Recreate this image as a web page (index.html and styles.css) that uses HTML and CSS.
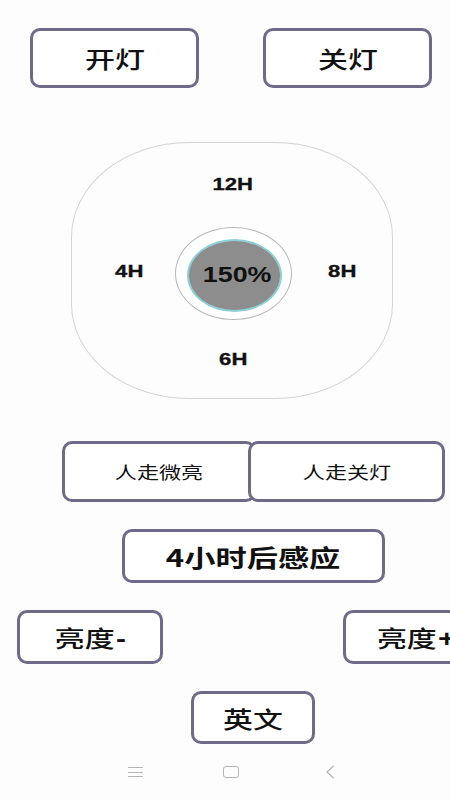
FILE: index.html
```html
<!DOCTYPE html>
<html lang="zh-CN">
<head>
    <meta charset="UTF-8">
    <title>灯光控制</title>
    <link rel="stylesheet" href="styles.css">
</head>
<body>
    <div class="top-row">
        <button class="btn btn-power"><span class="label">开灯</span></button>
        <button class="btn btn-power"><span class="label">关灯</span></button>
    </div>

    <!-- 定时选择盘 -->
    <div class="dial">
        <span class="hour hour-top">12H</span>
        <span class="hour hour-left">4H</span>
        <div class="ring">
            <div class="level"><span class="level-text">150%</span></div>
        </div>
        <span class="hour hour-right">8H</span>
        <span class="hour hour-bottom">6H</span>
    </div>

    <div class="mode-row">
        <button class="btn btn-mode"><span class="label small">人走微亮</span></button>
        <button class="btn btn-mode btn-mode-right"><span class="label small">人走关灯</span></button>
    </div>

    <button class="btn btn-sense"><span class="label bold">4小时后感应</span></button>

    <div class="bright-row">
        <button class="btn btn-bright"><span class="label">亮度<b class="sign">-</b></span></button>
        <button class="btn btn-bright"><span class="label">亮度<b class="sign">+</b></span></button>
    </div>

    <button class="btn btn-lang"><span class="label">英文</span></button>

    <div class="nav-bar">
        <span class="nav-menu"><i></i><i></i><i></i></span>
        <span class="nav-home"></span>
        <svg class="nav-back" width="10" height="14" viewBox="0 0 10 14">
            <path d="M8.5 1 L2 7 L8.5 13" fill="none" stroke="#b4b4b8" stroke-width="1.2"/>
        </svg>
    </div>
</body>
</html>
```

FILE: styles.css
```css
html, body {
    overflow: hidden;
}
body {
    margin: 0;
    width: 450px;
    height: 800px;
    background-color: #fdfdfe;
    font-family: "Noto Sans CJK SC", "Liberation Sans", sans-serif;
    color: #111;
}
.btn {
    display: flex;
    align-items: center;
    justify-content: center;
    flex-shrink: 0;
    box-sizing: border-box;
    padding: 0;
    background: #fff;
    border: 3px solid #6f6a87;
    border-radius: 10px;
    font-family: inherit;
    color: #111;
}
.label {
    display: inline-block;
    font-size: 23px;
    font-weight: 500;
    transform: scaleX(1.3);
    white-space: nowrap;
}
.label.small {
    font-size: 17px;
    font-weight: 400;
}
.label.bold {
    font-size: 24px;
    font-weight: 700;
    transform: scaleX(1.3);
}
.sign {
    font-family: "Liberation Sans", Arial, sans-serif;
    font-weight: 700;
    margin-left: 1px;
}

.top-row {
    display: flex;
    gap: 64px;
    padding: 28px 0 0 30px;
}
.btn-power {
    width: 169px;
    height: 60px;
}

.dial {
    display: grid;
    grid-template-columns: 114px 94px 114px;
    grid-template-rows: 84px 93px 80px;
    box-sizing: border-box;
    width: 322px;
    height: 257px;
    margin: 54px 0 0 71px;
    border: 1px solid #d4d4d6;
    border-radius: 118px / 95px;
}
.hour {
    align-self: center;
    justify-self: center;
    font-family: "Liberation Sans", Arial, sans-serif;
    font-weight: 700;
    font-size: 16px;
    transform: scaleX(1.38);
    -webkit-text-stroke: 0.3px #111;
}
.hour-top { grid-column: 2; grid-row: 1; }
.hour-left { grid-column: 1; grid-row: 2; margin-bottom: 4px; }
.hour-right { grid-column: 3; grid-row: 2; justify-self: end; margin: 0 42px 4px 0; }
.hour-bottom { grid-column: 2; grid-row: 3; }
.ring {
    grid-column: 2;
    grid-row: 2;
    justify-self: center;
    display: flex;
    align-items: center;
    justify-content: center;
    box-sizing: border-box;
    width: 117px;
    height: 93px;
    border: 1px solid #b9b6b6;
    border-radius: 50%;
    background: #fff;
}
.level {
    display: flex;
    align-items: center;
    justify-content: center;
    box-sizing: border-box;
    width: 95px;
    height: 73px;
    margin: 3px 0 0 2px;
    border: 2px solid #8fd0d6;
    border-radius: 50%;
    background: #8d8d8d;
}
.level-text {
    display: inline-block;
    margin-left: 6px;
    font-family: "Liberation Sans", Arial, sans-serif;
    font-weight: 700;
    font-size: 22px;
    transform: scaleX(1.22);
    color: #111;
}

.mode-row {
    display: flex;
    margin: 42px 0 0 62px;
}
.btn-mode {
    width: 194px;
    height: 61px;
}
.btn-mode-right {
    width: 197px;
    margin-left: -8px;
}

.btn-sense {
    width: 263px;
    height: 54px;
    margin: 27px 0 0 122px;
}

.bright-row {
    display: flex;
    gap: 180px;
    margin: 27px 0 0 17px;
}
.btn-bright {
    width: 146px;
    height: 54px;
}

.btn-lang {
    width: 124px;
    height: 53px;
    margin: 27px 0 0 191px;
}

.nav-bar {
    display: flex;
    align-items: center;
    height: 56px;
    padding-left: 128px;
}
.nav-menu {
    display: flex;
    flex-direction: column;
    justify-content: space-between;
    width: 15px;
    height: 10px;
}
.nav-menu i {
    display: block;
    height: 1px;
    background: #b4b4b8;
}
.nav-home {
    box-sizing: border-box;
    width: 16px;
    height: 12px;
    margin-left: 80px;
    border: 1.2px solid #b4b4b8;
    border-radius: 3px;
}
.nav-back {
    margin-left: 86px;
}
```
